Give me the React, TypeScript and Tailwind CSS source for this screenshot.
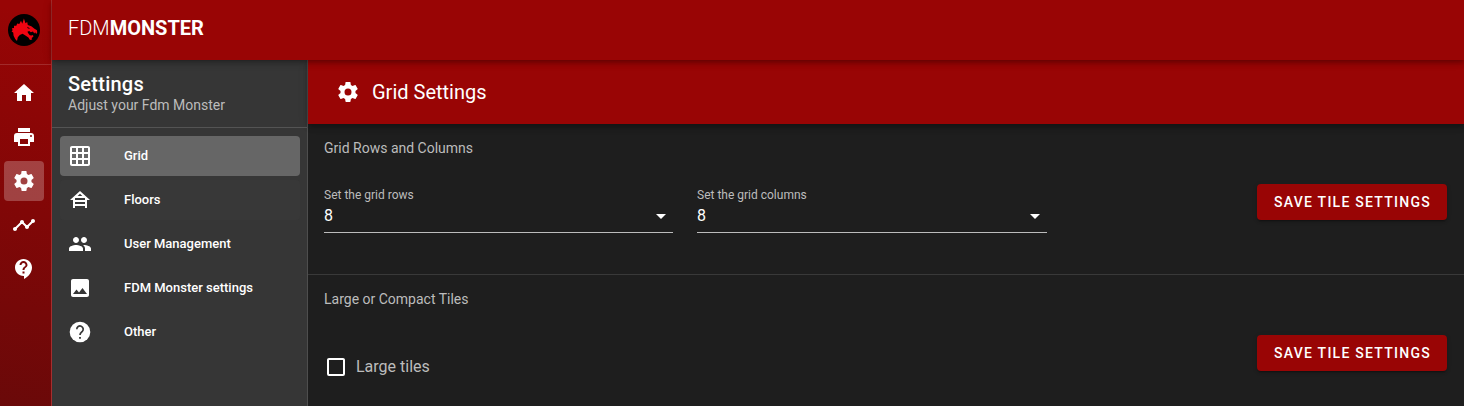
import { ReactNode } from "react";

const paths = {
  home: "M10,20V14H14V20H19V12H22L12,3L2,12H5V20H10Z",
  printer:
    "M18,3H6V7H18M19,12A1,1 0 0,1 18,11A1,1 0 0,1 19,10A1,1 0 0,1 20,11A1,1 0 0,1 19,12M16,19H8V14H16M19,8H5A3,3 0 0,0 2,11V17H6V21H18V17H22V11A3,3 0 0,0 19,8Z",
  cog: "M12,15.5A3.5,3.5 0 0,1 8.5,12A3.5,3.5 0 0,1 12,8.5A3.5,3.5 0 0,1 15.5,12A3.5,3.5 0 0,1 12,15.5M19.43,12.97C19.47,12.65 19.5,12.33 19.5,12C19.5,11.67 19.47,11.34 19.43,11L21.54,9.37C21.73,9.22 21.78,8.95 21.66,8.73L19.66,5.27C19.54,5.05 19.27,4.96 19.05,5.05L16.56,6.05C16.04,5.66 15.5,5.32 14.87,5.07L14.5,2.42C14.46,2.18 14.25,2 14,2H10C9.75,2 9.54,2.18 9.5,2.42L9.13,5.07C8.5,5.32 7.96,5.66 7.44,6.05L4.95,5.05C4.73,4.96 4.46,5.05 4.34,5.27L2.34,8.73C2.21,8.95 2.27,9.22 2.46,9.37L4.57,11C4.53,11.34 4.5,11.67 4.5,12C4.5,12.33 4.53,12.65 4.57,12.97L2.46,14.63C2.27,14.78 2.21,15.05 2.34,15.27L4.34,18.73C4.46,18.95 4.73,19.03 4.95,18.95L7.44,17.94C7.96,18.34 8.5,18.68 9.13,18.93L9.5,21.58C9.54,21.82 9.75,22 10,22H14C14.25,22 14.46,21.82 14.5,21.58L14.87,18.93C15.5,18.67 16.04,18.34 16.56,17.94L19.05,18.95C19.27,19.03 19.54,18.95 19.66,18.73L21.66,15.27C21.78,15.05 21.73,14.78 21.54,14.63L19.43,12.97Z",
  timeline:
    "M23 8c0 1.1-.9 2-2 2-.18 0-.35-.02-.51-.07l-3.56 3.55c.05.16.07.34.07.52 0 1.1-.9 2-2 2s-2-.9-2-2c0-.18.02-.36.07-.52l-2.55-2.55c-.16.05-.34.07-.52.07s-.36-.02-.52-.07l-4.55 4.56c.05.16.07.33.07.51 0 1.1-.9 2-2 2s-2-.9-2-2 .9-2 2-2c.18 0 .35.02.51.07l4.56-4.55C8.02 9.36 8 9.18 8 9c0-1.1.9-2 2-2s2 .9 2 2c0 .18-.02.36-.07.52l2.55 2.55c.16-.05.34-.07.52-.07s.36.02.52.07l3.55-3.56C19.02 8.35 19 8.18 19 8c0-1.1.9-2 2-2s2 .9 2 2z",
  support:
    "M11.5 2C6.81 2 3 5.81 3 10.5S6.81 19 11.5 19h.5v3c4.86-2.34 8-7 8-11.5C20 5.81 16.19 2 11.5 2zm1 14.5h-2v-2h2v2zm0-3.5h-2c0-3.25 3-3 3-5 0-1.1-.9-2-2-2s-2 .9-2 2h-2c0-2.21 1.79-4 4-4s4 1.79 4 4c0 2.5-3 2.75-3 5z",
  grid: "M20 2H4c-1.1 0-2 .9-2 2v16c0 1.1.9 2 2 2h16c1.1 0 2-.9 2-2V4c0-1.1-.9-2-2-2zM8 20H4v-4h4v4zm0-6H4v-4h4v4zm0-6H4V4h4v4zm6 12h-4v-4h4v4zm0-6h-4v-4h4v4zm0-6h-4V4h4v4zm6 12h-4v-4h4v4zm0-6h-4v-4h4v4zm0-6h-4V4h4v4z",
  floors:
    "M19 12h3L12 3 2 12h3v8h2v-2h10v2h2v-8zM7.21 10h9.58L17 10.19V12H7v-1.81L7.21 10zM14.36 8H9.64L12 5.69 14.36 8zM7 16v-2h10v2H7z",
  people:
    "M16 11c1.66 0 2.99-1.34 2.99-3S17.66 5 16 5c-1.66 0-3 1.34-3 3s1.34 3 3 3zm-8 0c1.66 0 2.99-1.34 2.99-3S9.66 5 8 5C6.34 5 5 6.34 5 8s1.34 3 3 3zm0 2c-2.33 0-7 1.17-7 3.5V19h14v-2.5c0-2.33-4.67-3.5-7-3.5zm8 0c-.29 0-.62.02-.97.05 1.16.84 1.97 1.97 1.97 3.45V19h6v-2.5c0-2.33-4.67-3.5-7-3.5z",
  image:
    "M21 19V5c0-1.1-.9-2-2-2H5c-1.1 0-2 .9-2 2v14c0 1.1.9 2 2 2h14c1.1 0 2-.9 2-2zM8.5 13.5l2.5 3.01L14.5 12l4.5 6H5l3.5-4.5z",
  caret: "M7,10L12,15L17,10H7Z",
  checkbox:
    "M19,3H5C3.89,3 3,3.89 3,5V19A2,2 0 0,0 5,21H19A2,2 0 0,0 21,19V5C21,3.89 20.1,3 19,3M19,5V19H5V5H19Z",
};

type IconName = keyof typeof paths;

function Icon({ name }: { name: IconName }) {
  return (
    <svg viewBox="0 0 24 24" className="size-6 shrink-0 fill-white" fillRule="evenodd">
      <path d={paths[name]} />
    </svg>
  );
}

function HelpIcon() {
  return (
    <svg viewBox="0 0 24 24" className="size-6 shrink-0">
      <circle cx="12" cy="12" r="10.3" fill="#fff" />
      <path
        d="M8.8 9.2A3.2 3.2 0 1 1 14.3 11.4C13 12.6 12 13.2 12 15"
        fill="none"
        stroke="#363636"
        strokeWidth="1.7"
      />
      <path d="M11.1 16.9H12.9V18.7H11.1Z" fill="#363636" />
    </svg>
  );
}

function Logo() {
  return (
    <svg viewBox="0 0 32 32" className="size-8">
      <circle cx="16" cy="16" r="16" fill="#000" />
      <path
        fill="#ee0411"
        d="M14.3 9.8L15.9 4.6L17.5 9.3L19.2 8L19.8 11L23.3 12.3L26.5 14.7L29 16.2L29.2 18.8L28.1 20L27.2 18.2L26.2 19.4L25 17.4L22.8 18.2L21.2 16.9L19.4 17.8L20.4 19.6L21.8 21.2L23.4 21.5L25 21L25.4 22.8L23.6 24L24.2 25.6L22 26L20.4 23.6L17.4 21.4L14.6 19.8L11.8 21L9.8 23.2L9 27L7.2 25L5.6 21.8L5.2 18.5L3.6 17.4L4.6 16.2L3.9 14.3L6 14L6 11.8L8.3 11.8L9.2 9.5L11.3 10L13 6.7Z"
      />
      <path d="M19 12.8L22.3 14.4L20 14.6Z" fill="#000" />
    </svg>
  );
}

const railIcons: IconName[] = ["home", "printer", "cog", "timeline", "support"];

const menu: { icon: IconName | "help"; label: string; style: string }[] = [
  { icon: "grid", label: "Grid", style: "bg-[#666666]" },
  { icon: "floors", label: "Floors", style: "bg-[#383838]" },
  { icon: "people", label: "User Management", style: "" },
  { icon: "image", label: "FDM Monster settings", style: "" },
  { icon: "help", label: "Other", style: "" },
];

function Select({ label, value }: { label: string; value: string }) {
  return (
    <div className="flex h-[49px] flex-col border-b border-[#bcbcbc]">
      <span className="h-5 text-xs leading-[22px] text-[#bcbcbc]">{label}</span>
      <div className="flex h-6 items-center justify-between">
        <span className="text-base">{value}</span>
        <Icon name="caret" />
      </div>
    </div>
  );
}

function SaveButton() {
  return (
    <button className="h-9 w-[190px] shrink-0 rounded bg-[#990505] pl-px text-sm font-medium tracking-[1.25px] whitespace-nowrap shadow-[0_3px_1px_-2px_rgba(0,0,0,0.2),0_2px_2px_0_rgba(0,0,0,0.14),0_1px_5px_0_rgba(0,0,0,0.12)]">
      SAVE TILE SETTINGS
    </button>
  );
}

function SectionTitle({ children }: { children: ReactNode }) {
  return <h2 className="text-sm leading-5 text-[#bcbcbc]">{children}</h2>;
}

export default function App() {
  return (
    <div className="flex h-[406px] w-full overflow-hidden bg-[#1e1e1e] font-['Roboto',sans-serif] text-white">
      <nav className="flex w-[52px] shrink-0 flex-col border-r border-[#a62e2e] bg-[linear-gradient(12deg,#6a0909_0%,#980505_96%)]">
        <div className="flex h-[65px] justify-center border-b border-white/15 pt-3.5 pr-[3px]">
          <Logo />
        </div>
        <div className="flex flex-col gap-1 pt-2 pl-1">
          {railIcons.map((name) => (
            <div
              key={name}
              className={`flex size-10 items-center justify-center rounded ${name === "cog" ? "bg-white/24" : ""}`}
            >
              <Icon name={name} />
            </div>
          ))}
        </div>
      </nav>
      <div className="flex min-w-0 flex-1 flex-col">
        <header className="relative z-10 flex h-[60px] shrink-0 items-center bg-[#990505] px-4 pb-1 text-xl shadow-[0_2px_4px_-1px_rgba(0,0,0,0.2),0_4px_5px_0_rgba(0,0,0,0.14),0_1px_10px_0_rgba(0,0,0,0.12)]">
          <span className="font-light">FDM</span>
          <span className="font-bold">MONSTER</span>
        </header>
        <div className="flex min-h-0 flex-1">
          <aside className="w-64 shrink-0 border-r border-[#4e4e4e] bg-[#363636]">
            <div className="h-[68px] border-b border-[#545454] px-4 pt-3">
              <h1 className="text-xl leading-6 font-medium tracking-[0.25px]">Settings</h1>
              <p className="text-sm leading-[18px] text-[#bcbcbc]">Adjust your Fdm Monster</p>
            </div>
            <ul className="flex flex-col gap-1 pt-2 pr-[7px] pl-2">
              {menu.map(({ icon, label, style }) => (
                <li key={label} className={`flex h-10 items-center gap-8 rounded px-2 ${style}`}>
                  {icon === "help" ? <HelpIcon /> : <Icon name={icon} />}
                  <span className="text-[13px] leading-4 font-medium">{label}</span>
                </li>
              ))}
            </ul>
          </aside>
          <main className="flex min-w-0 flex-1 flex-col">
            <div className="flex h-16 shrink-0 items-center gap-3 bg-[#990505] pl-7 shadow-[0_2px_4px_-1px_rgba(0,0,0,0.2),0_4px_5px_0_rgba(0,0,0,0.14),0_1px_10px_0_rgba(0,0,0,0.12)]">
              <Icon name="cog" />
              <span className="text-xl">Grid Settings</span>
            </div>
            <section className="h-[151px] shrink-0 border-b border-[#393939] pt-3.5 pr-[17px] pl-4">
              <SectionTitle>Grid Rows and Columns</SectionTitle>
              <div className="flex items-start justify-between pt-[26px]">
                <div className="grid grid-cols-[349px_350px] gap-6">
                  <Select label="Set the grid rows" value="8" />
                  <Select label="Set the grid columns" value="8" />
                </div>
                <SaveButton />
              </div>
            </section>
            <section className="pt-3.5 pr-[17px] pl-4">
              <SectionTitle>Large or Compact Tiles</SectionTitle>
              <div className="flex items-start justify-between pt-[26px]">
                <label className="flex items-center gap-2 pt-5 text-[#bcbcbc]">
                  <Icon name="checkbox" />
                  <span>Large tiles</span>
                </label>
                <SaveButton />
              </div>
            </section>
          </main>
        </div>
      </div>
    </div>
  );
}
